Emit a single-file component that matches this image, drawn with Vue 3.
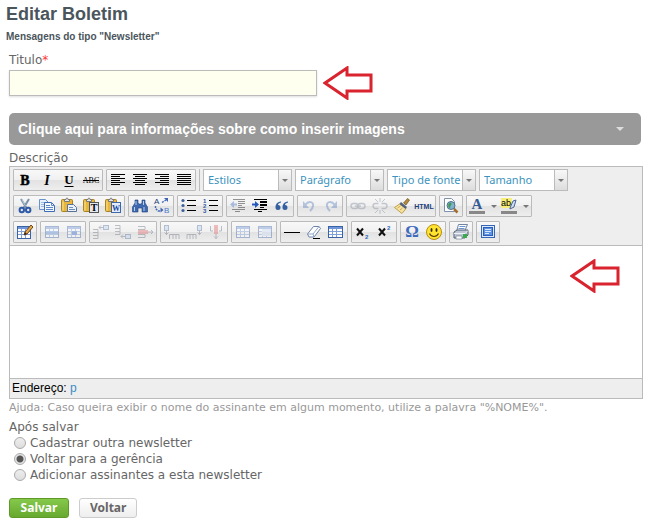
<template>
    <main class="page">
        <h1 class="title">Editar Boletim</h1>
        <p class="subtitle">Mensagens do tipo "Newsletter"</p>

        <form class="form" @submit.prevent>
            <label class="label" for="titulo">Titulo<span class="required">*</span></label>
            <div class="title-row">
                <input id="titulo" v-model="titulo" class="text-input" type="text" />
                <svg class="arrow" viewBox="0 0 50 34" aria-hidden="true">
                    <path :d="arrowPath" />
                </svg>
            </div>

            <button type="button" class="info-bar">
                <span>Clique aqui para informações sobre como inserir imagens</span>
                <span class="caret"></span>
            </button>

            <label class="label" for="descricao">Descrição</label>
            <div class="editor">
                <div class="toolbar">
                    <div v-for="(row, r) in toolbar" :key="r" class="toolbar-row">
                        <div v-for="(group, g) in row" :key="g" class="group">
                            <button v-for="name in group" :key="name" type="button" class="tool"
                                :class="{ 'tool-wide': name.endsWith('Color'), off: disabled.includes(name) }"
                                :aria-label="name">
                                <svg class="icon" viewBox="0 0 16 16" v-html="icons[name]"></svg>
                                <span v-if="name.endsWith('Color')" class="caret caret-dark"></span>
                            </button>
                        </div>
                        <template v-if="r === 0">
                            <span class="separator"></span>
                            <div v-for="item in combos" :key="item" class="combo">
                                <select class="combo-select" :aria-label="item">
                                    <option>{{ item }}</option>
                                </select>
                                <span class="combo-button"><span class="caret caret-dark"></span></span>
                            </div>
                        </template>
                    </div>
                </div>
                <div class="edit-area">
                    <textarea id="descricao" v-model="descricao" class="edit-text"></textarea>
                    <svg class="arrow arrow-over" viewBox="0 0 50 34" aria-hidden="true">
                        <path :d="arrowPath" />
                    </svg>
                </div>
                <div class="status">Endereço: <a href="#">p</a></div>
            </div>
            <p class="help">Ajuda: Caso queira exibir o nome do assinante em algum momento, utilize a palavra "%NOME%".</p>

            <fieldset class="after">
                <legend>Após salvar</legend>
                <label v-for="item in afterOptions" :key="item.value" class="radio-row">
                    <input v-model="after" type="radio" name="after" :value="item.value" />
                    {{ item.text }}
                </label>
            </fieldset>

            <div class="actions">
                <button type="submit" class="btn btn-save">Salvar</button>
                <button type="button" class="btn">Voltar</button>
            </div>
        </form>
    </main>
</template>

<script setup>
import { ref } from 'vue'

const titulo = ref('')
const descricao = ref('')
const after = ref('gerencia')

const afterOptions = [
    { value: 'outra', text: 'Cadastrar outra newsletter' },
    { value: 'gerencia', text: 'Voltar para a gerência' },
    { value: 'assinantes', text: 'Adicionar assinantes a esta newsletter' },
]

const combos = ['Estilos', 'Parágrafo', 'Tipo de fonte', 'Tamanho']

const toolbar = [
    [
        ['bold', 'italic', 'underline', 'strike'],
        ['left', 'center', 'right', 'justify'],
    ],
    [
        ['cut', 'copy', 'paste', 'pasteText', 'pasteWord'],
        ['find', 'replace'],
        ['bullets', 'numbers'],
        ['outdent', 'indent', 'quote'],
        ['undo', 'redo'],
        ['link', 'unlink', 'cleanup', 'html'],
        ['preview'],
        ['textColor', 'backColor'],
    ],
    [
        ['table'],
        ['rowProps', 'cellProps'],
        ['rowBefore', 'rowAfter', 'rowDelete'],
        ['colBefore', 'colAfter', 'colDelete'],
        ['splitCells', 'mergeCells'],
        ['rule', 'eraser', 'guides'],
        ['sub', 'sup'],
        ['charmap', 'smiley'],
        ['print'],
        ['fullscreen'],
    ],
]

const disabled = [
    'outdent', 'undo', 'redo', 'link', 'unlink', 'rowProps', 'cellProps', 'rowBefore', 'rowAfter',
    'rowDelete', 'colBefore', 'colAfter', 'colDelete', 'splitCells', 'mergeCells',
]

const arrowPath = 'M2 17 L24 2 V9 H48 V25 H24 V32 Z'

const lines = (list, color = '#000') =>
    list.map(([x, y, w]) => `<rect x="${x}" y="${y}" width="${w}" height="1" fill="${color}"/>`).join('')

const grid = (x, y, w, h) => `
    <rect x="${x + 0.5}" y="${y + 0.5}" width="${w - 1}" height="${h - 1}" fill="#fff" stroke="#3c62a6"/>
    <rect x="${x + 1}" y="${y + 1}" width="${w - 2}" height="2" fill="#6f96d8"/>
    <path d="M${x + 1} ${y + 5.5}h${w - 2}M${x + 1} ${y + 8.5}h${w - 2}M${x + 4.5} ${y + 3}v${h - 4}M${x + 8.5} ${y + 3}v${h - 4}" stroke="#7da0d8" fill="none"/>`

const clipboard = `
    <rect x=".5" y="1.500" width="11" height="12" rx="1" fill="#e6b73c" stroke="#a98222"/>
    <path d="M2 3.500v9" stroke="#fce493"/>
    <path d="M3.500 3.500v-2h1.500a1 1.500 0 0 1 2 0h1.500v2z" fill="#e8e8e8" stroke="#777"/>`

const icons = {
    bold: '<text x="8" y="13" text-anchor="middle" font-family="Liberation Serif, serif" font-size="14" font-weight="bold" stroke="#000" stroke-width=".5">B</text>',
    italic: '<text x="8" y="13" text-anchor="middle" font-family="Liberation Serif, serif" font-size="14" font-weight="bold" font-style="italic">I</text>',
    underline: '<text x="8" y="12" text-anchor="middle" font-family="Liberation Serif, serif" font-size="13" font-weight="bold">U</text><path d="M3.500 14.500h9" stroke="#000"/>',
    strike: '<text x="8" y="11" text-anchor="middle" font-family="Liberation Serif, serif" font-size="8">ABC</text><path d="M0 8.500h16" stroke="#000"/>',
    left: lines([[1, 2, 14], [1, 4, 9], [1, 6, 14], [1, 8, 9], [1, 10, 14], [1, 12, 9]]),
    center: lines([[1, 2, 14], [3, 4, 10], [1, 6, 14], [3, 8, 10], [1, 10, 14], [3, 12, 10]]),
    right: lines([[1, 2, 14], [6, 4, 9], [1, 6, 14], [6, 8, 9], [1, 10, 14], [6, 12, 9]]),
    justify: lines([[1, 2, 14], [1, 4, 14], [1, 6, 14], [1, 8, 14], [1, 10, 14], [1, 12, 14]]),
    cut: `<path d="M4 1 9.500 10M12 1 6.500 10" stroke="#7890a8" stroke-width="2" fill="none"/>
        <path d="M4.800 1.500 8.500 8" stroke="#dbe5ee" stroke-width=".6"/>
        <ellipse cx="4.800" cy="12" rx="2.200" ry="2.300" fill="none" stroke="#2c59a8" stroke-width="2"/>
        <ellipse cx="11.200" cy="12" rx="2.200" ry="2.300" fill="none" stroke="#2c59a8" stroke-width="2"/>`,
    copy: `<path d="M.5 1.500h6l2.500 2.500v7.500H.5z" fill="#e7f0fd" stroke="#6b91cc"/>
        <path d="M2 4.500h4M2 6.500h4M2 8.500h4" stroke="#9cb9e4"/>
        <path d="M5.500 4.500h7l3 3v6h-10z" fill="#f4f8ff" stroke="#3f6db5"/>
        <path d="M12.500 4.500v3h3M7 7.500h4M7 9.500h7M7 11.500h7" stroke="#5e87c8" fill="none"/>`,
    paste: clipboard + `<path d="M6.500 6.500h6l3 3v4h-9z" fill="#eaf1fb" stroke="#597195"/>
        <path d="M8 9.500h4M8 11.500h6" stroke="#6c8cb9"/>`,
    pasteText: clipboard + `<rect x="6.500" y="4.500" width="9" height="10" fill="#e4e8ee" stroke="#555"/>
        <text x="11" y="13" text-anchor="middle" font-family="Liberation Serif, serif" font-size="10" font-weight="bold">T</text>`,
    pasteWord: clipboard + `<rect x="6.500" y="4.500" width="9" height="10" fill="#e2edff" stroke="#3e67aa"/>
        <text x="11" y="13" text-anchor="middle" font-family="Liberation Serif, serif" font-size="8" font-weight="bold" fill="#17489d">W</text>`,
    find: `<path d="M3 2h3v3l1 1h2l1-1V2h3v3l2.500 4v5h-5.500v-4H6v4H.5V9L3 5z" fill="#3f68ae" stroke="#1d3f7c" stroke-width=".6"/>
        <path d="M4 3v4M11.500 3v4M2.500 9v4M12 9v4" stroke="#b6d0f4"/>`,
    replace: `<text x="0" y="6" font-family="Liberation Sans, sans-serif" font-size="8" fill="#24407a">A</text>
        <text x="10" y="15" font-family="Liberation Sans, sans-serif" font-size="8" fill="#4b79cf">B</text>
        <path d="M1.500 8v2.500l2.500 2.500h3M8 4.500l4-2.500" fill="none" stroke="#4169b8" stroke-width="1.400" stroke-dasharray="2 1"/>
        <path d="M6.500 9.500v5l3-2.500zM10 0h4v4z" fill="#3c63b4"/>`,
    bullets: lines([[6, 2, 9], [6, 7, 9], [6, 12, 9]]) +
        '<g fill="#3d5f9c"><circle cx="2" cy="2.500" r="1.600"/><circle cx="2" cy="7.500" r="1.600"/><circle cx="2" cy="12.500" r="1.600"/></g>',
    numbers: lines([[6, 2, 9], [6, 7, 9], [6, 12, 9]]) +
        '<g font-family="Liberation Sans, sans-serif" font-size="6" font-weight="bold" fill="#31579f"><text x="0" y="5">1</text><text x="0" y="10">2</text><text x="0" y="15">3</text></g>',
    outdent: lines([[3, 1, 12], [8, 3, 7], [8, 5, 7], [8, 7, 4], [8, 9, 7], [2, 11, 13], [5, 13, 5]]) +
        '<path d="M0 6.500 4 3v2.500h3v2H4V10z" fill="#3e6cb8"/>',
    indent: `<g fill="#000"><rect x="2" y="1" width="13" height="1"/><rect x="8" y="3" width="7" height="2"/><rect x="8" y="6" width="7" height="2"/>
        <rect x="8" y="9" width="4" height="1"/><rect x="2" y="11" width="13" height="1"/><rect x="6" y="13" width="4" height="1"/></g>
        <path d="M7 6.500 3 3v2.500H0v2h3V10z" fill="#2458bb"/>`,
    quote: '<path d="M7 3.500C3 4 1.500 6.500 1.500 9.500a2.500 2.500 0 1 0 2.500-2.500c0-1 1-2 3-2.500zM14 3.500c-4 .5-5.500 3-5.500 6A2.500 2.500 0 1 0 11 7c0-1 1-2 3-2.500z" fill="#35609f"/>',
    undo: '<path d="M4 7c4-5 9-3 8 1-.5 3-2 4-3 5" fill="none" stroke="#5a7fbd" stroke-width="2"/><path d="M2 3v7h6z" fill="#5a7fbd"/>',
    redo: '<path d="M12 7C8 2 3 4 4 8c.5 3 2 4 3 5" fill="none" stroke="#5a7fbd" stroke-width="2"/><path d="M14 3v7H8z" fill="#5a7fbd"/>',
    link: '<g fill="none" stroke="#7c8799" stroke-width="1.400"><rect x="1" y="5.500" width="7" height="5" rx="2.500"/><rect x="8" y="5.500" width="7" height="5" rx="2.500"/><path d="M5 8h6"/></g>',
    unlink: '<g fill="none" stroke="#7c8799" stroke-width="1.400"><path d="M6.500 5.500h-3a2.500 2.500 0 0 0 0 5h3M9.500 5.500h3a2.500 2.500 0 0 1 0 5h-3"/><path d="M8 0v4M3 1l3 3M13 1l-3 3M8 12v4M3 15l3-3M13 15l-3-3" stroke-width="1"/></g>',
    cleanup: `<path d="m9.500 5 4-4.500 2 1.500L12 7z" fill="#b58a3d" stroke="#5d4310" stroke-width=".6"/>
        <path d="m5.500 6 6.500 4.500-4 5L.5 9.500z" fill="#f6e3a0" stroke="#c0a04c"/>
        <path d="m7 4 6 5-1.500 2L5.500 6z" fill="#54627e"/><path d="m3.500 10 3-2M6 12l2.500-2" stroke="#cba955"/>`,
    html: '<text x="8" y="11" text-anchor="middle" font-family="Liberation Sans, sans-serif" font-size="7" font-weight="bold" fill="#1c3f7c">HTML</text>',
    preview: `<path d="M1.500.5h7l3 3v10h-10z" fill="#fff" stroke="#8091ad"/>
        <circle cx="8" cy="7.500" r="4" fill="#7db4cc" stroke="#4f7187"/>
        <path d="M5.500 6c2-2 3-1 3 0s-2 2-1 4c-2 0-3-2-2-4z" fill="#459659"/>
        <path d="m11 11 3.500 3.500" stroke="#a36d2c" stroke-width="2.500"/>`,
    textColor: '<text x="8" y="11" text-anchor="middle" font-family="Liberation Serif, serif" font-size="15" font-weight="bold" fill="#355b94">A</text><rect x="0" y="13" width="16" height="3" fill="#888"/>',
    backColor: `<rect x="0" y="0" width="11" height="10" rx="1" fill="#f8ed75"/>
        <path d="m9 10 3-7 3-1-2 7-4 2z" fill="#cfdcf1" stroke="#476593"/>
        <text x="0" y="8" font-family="Liberation Sans, sans-serif" font-size="9">ab</text><rect x="0" y="13" width="16" height="3" fill="#888"/>`,
    table: grid(0, 2, 14, 13) + '<path d="m7 11 1-3 6-7 2 2-6 7z" fill="#e4aa48" stroke="#70451d"/><path d="m7 11 1-3 2 2z" fill="#3b2a1d"/>',
    rowProps: grid(1, 2, 14, 12) + '<rect x="2" y="7" width="12" height="3" fill="#5f91df"/>',
    cellProps: grid(1, 2, 14, 12) + '<rect x="6" y="7" width="5" height="4" fill="#326ccb"/>',
    rowBefore: '<path d="M0 5.500h5v3H0M0 8.500h5v3H0M0 11.500h5v3H0M6 3.500h4M8 1.500l-2 2 2 2" fill="none" stroke="#666f7d"/><rect x="10.500" y="1.500" width="5" height="4" fill="#b9d0f2" stroke="#53719e"/>',
    rowAfter: '<path d="M0 1.500h5v3H0M0 4.500h5v3H0M0 7.500h5v3H0M6 12.500h4M8 10.500l-2 2 2 2" fill="none" stroke="#666f7d"/><rect x="10.500" y="10.500" width="5" height="4" fill="#b9d0f2" stroke="#53719e"/>',
    rowDelete: '<path d="M1 2.500h7v3H1M1 13.500h7v-3H1M10 8h6M14 6l2 2-2 2" fill="none" stroke="#666f7d"/><rect x="1" y="6" width="10" height="4" fill="#df6666"/>',
    colBefore: '<path d="M5.500 15v-4.500h3.500v4.500M9 10.500h3v4.500M12 10.500h3v4.500M2.500 7v4M.5 8.500l2 2 2-2" fill="none" stroke="#666f7d"/><rect x=".5" y="1.500" width="4" height="5" fill="#b9d0f2" stroke="#53719e"/>',
    colAfter: '<path d="M1 15v-4.500h3v4.500M4 10.500h3v4.500M7 10.500h3v4.500M13.500 7v4M11.500 8.500l2 2 2-2" fill="none" stroke="#666f7d"/><rect x="11.500" y="1.500" width="4" height="5" fill="#b9d0f2" stroke="#53719e"/>',
    colDelete: '<path d="M2.500 2v5H5M13.500 2v5H11M8 10v5M6 12.500l2 2 2-2" fill="none" stroke="#666f7d"/><rect x="6" y="1" width="4" height="9" fill="#df6666"/>',
    splitCells: grid(1, 2, 14, 12),
    mergeCells: grid(1, 2, 14, 12) + '<rect x="5" y="5" width="9" height="7" fill="#cfe0fa"/>',
    rule: '<path d="M0 8.500h16" stroke="#000"/>',
    eraser: `<path d="m1.500 10 6-7.500h5.500l1.500 2-6.500 8.500H3z" fill="#fff" stroke="#6d83a8"/>
        <path d="M1.500 10H7l6-7.500M7 10l1 3" fill="none" stroke="#91a8cd"/><path d="M7 14.500h7" stroke="#000"/>`,
    guides: grid(0, 2, 15, 12),
    sub: '<path d="m2 4.500 6 7M8 4.500l-6 7" stroke="#111" stroke-width="2"/><text x="10" y="15" font-family="Liberation Sans, sans-serif" font-size="6" font-weight="bold" fill="#2c68ba">2</text>',
    sup: '<path d="m2 4.500 6 7M8 4.500l-6 7" stroke="#111" stroke-width="2"/><text x="10" y="6" font-family="Liberation Sans, sans-serif" font-size="6" font-weight="bold" fill="#2c68ba">2</text>',
    charmap: '<text x="8" y="13" text-anchor="middle" font-family="Liberation Serif, serif" font-size="17" font-weight="bold" fill="#3d6bc0">Ω</text>',
    smiley: `<circle cx="8" cy="8" r="7.500" fill="#ffe52e" stroke="#b88d14"/>
        <ellipse cx="5.500" cy="6" rx="1" ry="2" fill="#3c2c08"/><ellipse cx="10.500" cy="6" rx="1" ry="2" fill="#3c2c08"/>
        <path d="M3.500 9.500c2 4 7 4 9 0" fill="none" stroke="#5b3e08" stroke-width="1.200"/>`,
    print: `<path d="M5.500.5h9l-3 7h-8z" fill="#fff" stroke="#71839d"/><path d="M6.500 2.500h6M5.500 4.500h6" stroke="#6c95d3"/>
        <path d="m1 8 3-2h11v5l-3 3H1z" fill="#bdc6d2" stroke="#556274"/><path d="M1 9.500h11l3-3" fill="none" stroke="#eef2f7"/>
        <path d="M3 12h6v3H3z" fill="#fff" stroke="#61708a" stroke-width=".6"/><rect x="10" y="10" width="4" height="4" fill="#36ad48"/>`,
    fullscreen: `<rect x="1.500" y="1.500" width="13" height="12" fill="#dceaff" stroke="#3566b8"/>
        <rect x="3.500" y="3.500" width="9" height="8" fill="#5d93e4" stroke="#2c5fb3"/><path d="M5 5.500h6M5 7.500h6M5 9.500h4" stroke="#d9e8ff"/>`,
}
</script>

<style>
body {
    margin: 0;
    background: #fff;
}
</style>

<style scoped>
.page {
    padding: 4px 7px 6px 9px;
    font-family: "DejaVu Sans", Verdana, sans-serif;
    font-size: 12px;
    line-height: 16px;
    color: #666;
}

.title,
.subtitle {
    margin: 0 0 0 -3px;
    font-family: "Liberation Sans", Arial, sans-serif;
    font-weight: bold;
    color: #4a555c;
}

.title {
    font-size: 18px;
    line-height: 20px;
}

.subtitle {
    margin-top: 6px;
    font-size: 10px;
    line-height: 14px;
}

.label {
    display: block;
}

.form > .label:first-child {
    margin-top: 8px;
}

.required {
    color: #f33;
}

.title-row {
    display: flex;
    align-items: center;
    gap: 6px;
    margin-top: -2px;
}

.text-input {
    box-sizing: border-box;
    width: 308px;
    height: 26px;
    border: 1px solid #bbb;
    background: #fffff0;
    box-shadow: 0 1px 2px #ddd;
}

.arrow {
    width: 50px;
    height: 34px;
    fill: #fff;
    stroke: #d9232e;
    stroke-width: 3;
}

.info-bar {
    display: flex;
    align-items: center;
    justify-content: space-between;
    width: calc(100% - 2px);
    height: 32px;
    margin: 13px 0 5px;
    padding: 0 17px 0 9px;
    border: 0;
    border-radius: 5px;
    background: #999;
    color: #fff;
    font: bold 14px "Liberation Sans", Arial, sans-serif;
}

.caret {
    border: 4px solid transparent;
    border-top-color: #ddd;
    border-bottom: 0;
}

.caret-dark {
    border-width: 3px;
    border-bottom: 0;
    border-top-color: #777;
}

.editor {
    border: 1px solid #bbb;
}

.toolbar {
    display: flex;
    flex-direction: column;
    gap: 4px;
    padding: 2px 3px;
    background: #eee;
    border-bottom: 1px solid #bbb;
}

.toolbar-row {
    display: flex;
    gap: 3px;
}

.group {
    display: flex;
    border: 1px solid #bbb;
    border-radius: 1px;
    background: linear-gradient(#f8f8f8, #f0f0f0 50%, #e2e2e2 51%, #eee);
}

.tool {
    display: flex;
    align-items: center;
    justify-content: center;
    width: 22px;
    height: 20px;
    padding: 0;
    border: 0;
    background: none;
}

.tool-wide {
    width: 32px;
    gap: 6px;
}

.icon {
    width: 16px;
    height: 16px;
    flex-shrink: 0;
    overflow: visible;
}

.off .icon {
    opacity: 0.4;
}

.separator {
    width: 1px;
    background: #bbb;
}

.combo {
    display: flex;
    box-sizing: border-box;
    width: 89px;
    height: 22px;
    border: 1px solid #bbb;
    background: #fff;
}

.combo-select {
    flex: 1;
    min-width: 0;
    padding: 0 0 2px 4px;
    border: 0;
    appearance: none;
    background: none;
    color: #3c93bd;
    font: 11px "Noto Sans", Tahoma, sans-serif;
}

.combo-button {
    display: flex;
    align-items: center;
    justify-content: center;
    width: 12px;
    border-left: 1px solid #bbb;
    background: linear-gradient(#f8f8f8, #ddd);
}

.edit-area {
    position: relative;
}

.edit-text {
    display: block;
    box-sizing: border-box;
    width: 100%;
    height: 132px;
    border: 0;
    resize: none;
    outline: none;
}

.arrow-over {
    position: absolute;
    top: 13px;
    right: 22px;
}

.status {
    padding: 1px 2px;
    border-top: 1px solid #bbb;
    background: #eee;
    color: #000;
    font: 12px/17px "Liberation Sans", Arial, sans-serif;
}

.status a {
    color: #3c8dc5;
    text-decoration: none;
}

.help {
    margin: 1px 0 0;
    font-size: 11px;
    color: #999;
}

.after {
    margin: 3px 0 0;
    padding: 0;
    border: 0;
}

.after legend {
    padding: 0;
}

.radio-row {
    display: flex;
    align-items: center;
    gap: 4px;
    padding-left: 5px;
}

.radio-row input {
    box-sizing: border-box;
    width: 12px;
    height: 12px;
    margin: 0;
    border: 1px solid #aaa;
    border-radius: 50%;
    appearance: none;
    background: linear-gradient(#eee, #ddd);
}

.radio-row input:checked {
    background: radial-gradient(#555 0 3px, #e5e5e5 4px);
}

.actions {
    display: flex;
    gap: 10px;
    margin-top: 15px;
}

.btn {
    height: 20px;
    padding: 0 10px 1px;
    border: 1px solid #ccc;
    border-radius: 3px;
    background: linear-gradient(#fff, #eee);
    color: #666;
    font: bold 12px/16px "Noto Sans", Tahoma, sans-serif;
}

.btn-save {
    min-width: 60px;
    border-color: #5f9a28;
    background: linear-gradient(#85c94b, #67a82f);
    color: #fff;
}
</style>
